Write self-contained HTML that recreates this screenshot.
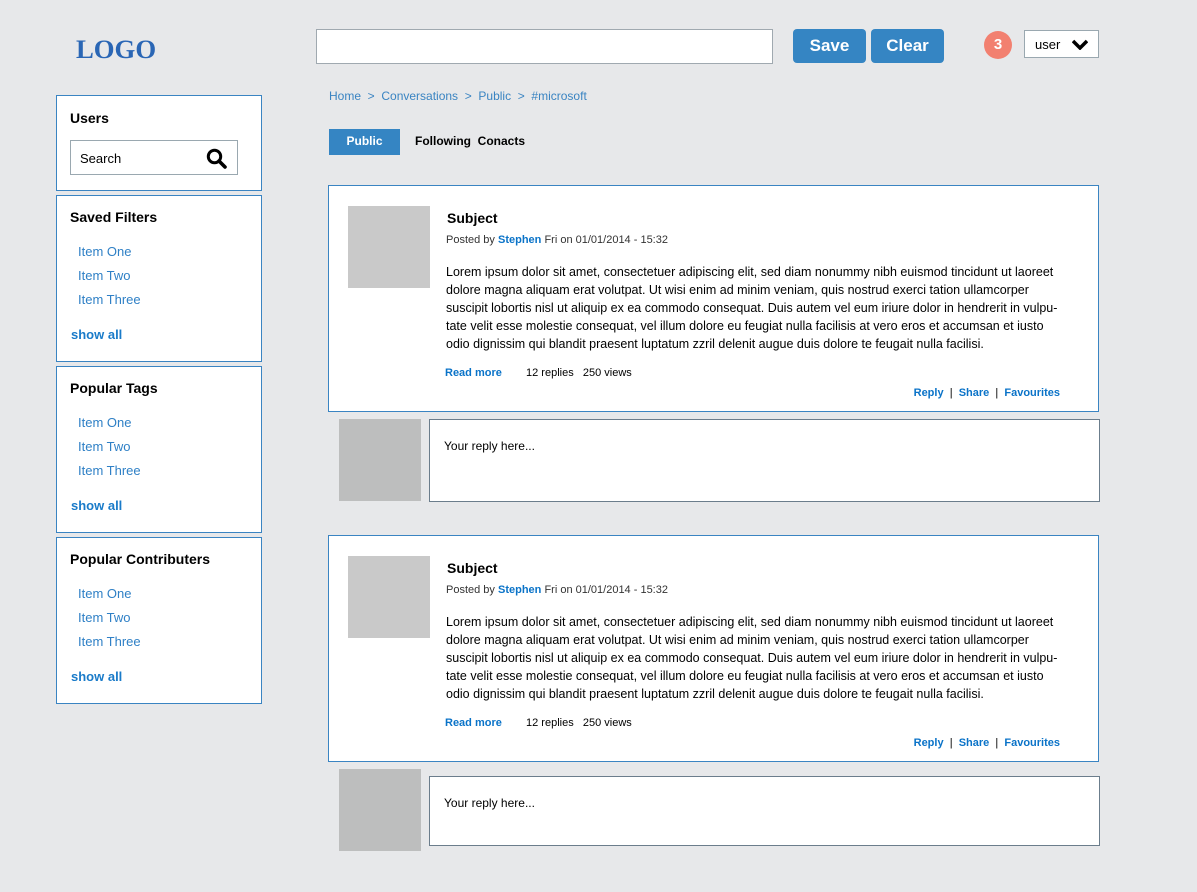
<!DOCTYPE html>
<html><head><meta charset="utf-8"><style>
*{box-sizing:border-box;margin:0;padding:0}
body{width:1197px;height:892px;background:#e7e8ea;font-family:"Liberation Sans",sans-serif;position:relative;overflow:hidden;color:#000}
.a{position:absolute}
.logo{left:76px;top:34px;font-family:"Liberation Serif",serif;font-weight:bold;font-size:26.7px;color:#2a66b5}
.search{left:316px;top:29px;width:457px;height:35px;background:#fff;border:1px solid #a0a9b0}
.btn{top:29px;height:34px;background:#3585c3;color:#fff;font-weight:bold;font-size:17px;border-radius:4px;text-align:center;line-height:33px}
.badge{left:984px;top:31px;width:28px;height:28px;border-radius:50%;background:#f28070;color:#fff;font-weight:bold;font-size:15px;text-align:center;line-height:28px}
.user{left:1024px;top:30px;width:75px;height:28px;background:#fff;border:1px solid #9aa8b0;font-size:13px;padding:6px 0 0 10px}
.side{left:56px;width:206px;background:#fff;border:1px solid #3a84c2}
.side h3{position:absolute;left:13px;font-size:14px;font-weight:bold}
.side .it{position:absolute;left:21px;font-size:13px;color:#2f80c6}
.side .sa{position:absolute;left:14px;font-size:13px;font-weight:bold;color:#1a7bc9}
.bc{left:329px;top:89px;font-size:12px;color:#3a84c2}
.post{left:328px;width:771px;height:227px;background:#fff;border:1px solid #3a84c2}
.av{background:#c9c9c9;width:82px;height:82px}
.post .subj{position:absolute;left:118px;top:24px;font-size:14px;font-weight:bold}
.post .by{position:absolute;left:117px;top:48px;font-size:11px;color:#333}
.blue{color:#0a73c8;font-weight:bold}
.post .txt{position:absolute;left:117px;top:77px;font-size:12.5px;line-height:18px;white-space:nowrap}
.post .rm{position:absolute;left:116px;top:181px;font-size:11px;white-space:nowrap}
.post .rp{position:absolute;left:197px;top:181px;font-size:11px;white-space:nowrap}
.post .acts{position:absolute;right:38px;top:201px;font-size:11px}
.rav{left:339px;width:82px;height:82px;background:#bdbebe}
.rin{left:429px;width:671px;background:#fff;border:1px solid #6b7d8c;font-size:12px;padding:19px 0 0 14px}
</style></head><body>
<div class="a logo">LOGO</div>
<div class="a search"></div>
<div class="a btn" style="left:793px;width:73px">Save</div>
<div class="a btn" style="left:871px;width:73px">Clear</div>
<div class="a badge">3</div>
<div class="a user">user<svg style="position:absolute;right:10px;top:8px" width="16" height="11" viewBox="0 0 16 11"><path d="M1 2 L8 9 L15 2" stroke="#000" stroke-width="3.5" fill="none"/></svg></div>

<div class="a side" style="top:95px;height:96px"><h3 style="top:14px">Users</h3>
<div style="position:absolute;left:13px;top:44px;width:168px;height:35px;border:1px solid #9aa8b0;font-size:13px;padding:10px 0 0 9px">Search
<svg style="position:absolute;right:10px;top:7px" width="21" height="21" viewBox="0 0 21 21"><circle cx="8.5" cy="8.5" r="6.2" stroke="#000" stroke-width="3" fill="none"/><path d="M13 13 L19 19" stroke="#000" stroke-width="3.6" stroke-linecap="round"/></svg></div></div>

<div class="a side" style="top:195px;height:167px"><h3 style="top:13px">Saved Filters</h3>
<div class="it" style="top:48px">Item One</div><div class="it" style="top:72px">Item Two</div><div class="it" style="top:96px">Item Three</div><div class="sa" style="top:131px">show all</div></div>
<div class="a side" style="top:366px;height:167px"><h3 style="top:13px">Popular Tags</h3>
<div class="it" style="top:48px">Item One</div><div class="it" style="top:72px">Item Two</div><div class="it" style="top:96px">Item Three</div><div class="sa" style="top:131px">show all</div></div>
<div class="a side" style="top:537px;height:167px"><h3 style="top:13px">Popular Contributers</h3>
<div class="it" style="top:48px">Item One</div><div class="it" style="top:72px">Item Two</div><div class="it" style="top:96px">Item Three</div><div class="sa" style="top:131px">show all</div></div>

<div class="a bc">Home &nbsp;&gt;&nbsp; Conversations &nbsp;&gt;&nbsp; Public &nbsp;&gt;&nbsp; #microsoft</div>
<div class="a" style="left:329px;top:129px;width:71px;height:26px;background:#3585c3;color:#fff;font-size:12px;font-weight:bold;text-align:center;line-height:24px">Public</div>
<div class="a" style="left:415px;top:134px;font-size:12px;font-weight:bold">Following&nbsp; Conacts</div>

<div class="a post" style="top:185px">
<div class="a av" style="left:19px;top:20px"></div>
<div class="subj">Subject</div>
<div class="by">Posted by <span class="blue">Stephen</span> Fri on 01/01/2014 - 15:32</div>
<div class="txt">Lorem ipsum dolor sit amet, consectetuer adipiscing elit, sed diam nonummy nibh euismod tincidunt ut laoreet<br>dolore magna aliquam erat volutpat. Ut wisi enim ad minim veniam, quis nostrud exerci tation ullamcorper<br>suscipit lobortis nisl ut aliquip ex ea commodo consequat. Duis autem vel eum iriure dolor in hendrerit in vulpu-<br>tate velit esse molestie consequat, vel illum dolore eu feugiat nulla facilisis at vero eros et accumsan et iusto<br>odio dignissim qui blandit praesent luptatum zzril delenit augue duis dolore te feugait nulla facilisi.</div>
<div class="rm"><span class="blue">Read more</span></div>
<div class="rp">12 replies &nbsp; 250 views</div>
<div class="acts"><span class="blue">Reply</span> &nbsp;|&nbsp; <span class="blue">Share</span> &nbsp;|&nbsp; <span class="blue">Favourites</span></div>
</div>
<div class="a rav" style="top:419px"></div>
<div class="a rin" style="top:419px;height:83px">Your reply here...</div>

<div class="a post" style="top:535px">
<div class="a av" style="left:19px;top:20px"></div>
<div class="subj">Subject</div>
<div class="by">Posted by <span class="blue">Stephen</span> Fri on 01/01/2014 - 15:32</div>
<div class="txt">Lorem ipsum dolor sit amet, consectetuer adipiscing elit, sed diam nonummy nibh euismod tincidunt ut laoreet<br>dolore magna aliquam erat volutpat. Ut wisi enim ad minim veniam, quis nostrud exerci tation ullamcorper<br>suscipit lobortis nisl ut aliquip ex ea commodo consequat. Duis autem vel eum iriure dolor in hendrerit in vulpu-<br>tate velit esse molestie consequat, vel illum dolore eu feugiat nulla facilisis at vero eros et accumsan et iusto<br>odio dignissim qui blandit praesent luptatum zzril delenit augue duis dolore te feugait nulla facilisi.</div>
<div class="rm"><span class="blue">Read more</span></div>
<div class="rp">12 replies &nbsp; 250 views</div>
<div class="acts"><span class="blue">Reply</span> &nbsp;|&nbsp; <span class="blue">Share</span> &nbsp;|&nbsp; <span class="blue">Favourites</span></div>
</div>
<div class="a rav" style="top:769px"></div>
<div class="a rin" style="top:776px;height:70px">Your reply here...</div>
</body></html>
